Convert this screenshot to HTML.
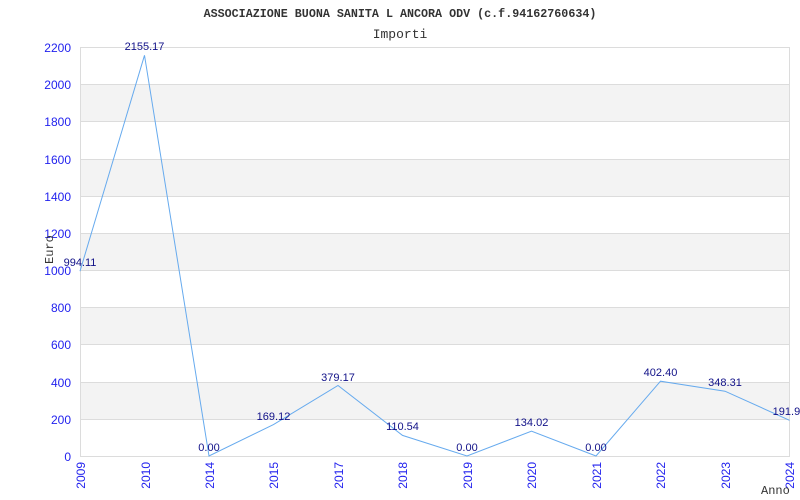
<!DOCTYPE html>
<html><head><meta charset="utf-8"><style>body{margin:0;background:#fff}svg{display:block}</style></head><body>
<svg width="800" height="500" xmlns="http://www.w3.org/2000/svg">
<rect width="800" height="500" fill="#fff"/>
<g fill="#f3f3f3">
<rect x="80" y="84" width="710" height="37"/><rect x="80" y="159" width="710" height="37"/><rect x="80" y="233" width="710" height="37"/><rect x="80" y="307" width="710" height="37"/><rect x="80" y="382" width="710" height="37"/>
</g>
<g stroke="#dcdcdc" stroke-width="1">
<line x1="80" y1="47.5" x2="790" y2="47.5"/><line x1="80" y1="84.5" x2="790" y2="84.5"/><line x1="80" y1="121.5" x2="790" y2="121.5"/><line x1="80" y1="159.5" x2="790" y2="159.5"/><line x1="80" y1="196.5" x2="790" y2="196.5"/><line x1="80" y1="233.5" x2="790" y2="233.5"/><line x1="80" y1="270.5" x2="790" y2="270.5"/><line x1="80" y1="307.5" x2="790" y2="307.5"/><line x1="80" y1="344.5" x2="790" y2="344.5"/><line x1="80" y1="382.5" x2="790" y2="382.5"/><line x1="80" y1="419.5" x2="790" y2="419.5"/><line x1="80" y1="456.5" x2="790" y2="456.5"/>
<line x1="80.5" y1="47" x2="80.5" y2="457"/><line x1="789.5" y1="47" x2="789.5" y2="457"/>
</g>
<text x="400" y="17" text-anchor="middle" font-family="Liberation Mono, monospace" font-weight="bold" font-size="11.7" fill="#333">ASSOCIAZIONE BUONA SANITA L ANCORA ODV (c.f.94162760634)</text>
<text x="400" y="38" text-anchor="middle" font-family="Liberation Mono, monospace" font-size="13" fill="#333">Importi</text>
<g font-family="Liberation Sans, sans-serif" font-size="12" fill="#2222ee" text-anchor="end">
<text x="71" y="52">2200</text><text x="71" y="89">2000</text><text x="71" y="126">1800</text><text x="71" y="164">1600</text><text x="71" y="201">1400</text><text x="71" y="238">1200</text><text x="71" y="275">1000</text><text x="71" y="312">800</text><text x="71" y="349">600</text><text x="71" y="387">400</text><text x="71" y="424">200</text><text x="71" y="461">0</text>
</g>
<g font-family="Liberation Sans, sans-serif" font-size="12" fill="#2222ee" text-anchor="end">
<text transform="translate(85,462) rotate(-90)">2009</text>
<text transform="translate(150,462) rotate(-90)">2010</text>
<text transform="translate(214,462) rotate(-90)">2014</text>
<text transform="translate(278,462) rotate(-90)">2015</text>
<text transform="translate(343,462) rotate(-90)">2017</text>
<text transform="translate(407,462) rotate(-90)">2018</text>
<text transform="translate(472,462) rotate(-90)">2019</text>
<text transform="translate(536,462) rotate(-90)">2020</text>
<text transform="translate(601,462) rotate(-90)">2021</text>
<text transform="translate(665,462) rotate(-90)">2022</text>
<text transform="translate(730,462) rotate(-90)">2023</text>
<text transform="translate(794,462) rotate(-90)">2024</text>
</g>
<text transform="translate(53,264) rotate(-90)" font-family="Liberation Mono, monospace" font-size="12" fill="#333">Euro</text>
<text x="761" y="494" font-family="Liberation Mono, monospace" font-size="12" fill="#333">Anno</text>
<polyline fill="none" stroke="#66aaee" stroke-width="1" points="80,271.2 144.5,55.3 209,456 273.5,424.6 338,385.5 402.5,435.4 467,456 531.5,431.1 596,456 660.5,381.2 725,391.2 789.5,420.3"/>
<g font-family="Liberation Sans, sans-serif" font-size="11" fill="#111188" text-anchor="middle">
<text x="80" y="266">994.11</text><text x="144.5" y="50">2155.17</text><text x="209" y="451">0.00</text><text x="273.5" y="420">169.12</text><text x="338" y="381">379.17</text><text x="402.5" y="430">110.54</text><text x="467" y="451">0.00</text><text x="531.5" y="426">134.02</text><text x="596" y="451">0.00</text><text x="660.5" y="376">402.40</text><text x="725" y="386">348.31</text><text x="789.5" y="415">191.90</text>
</g>
</svg>
</body></html>
